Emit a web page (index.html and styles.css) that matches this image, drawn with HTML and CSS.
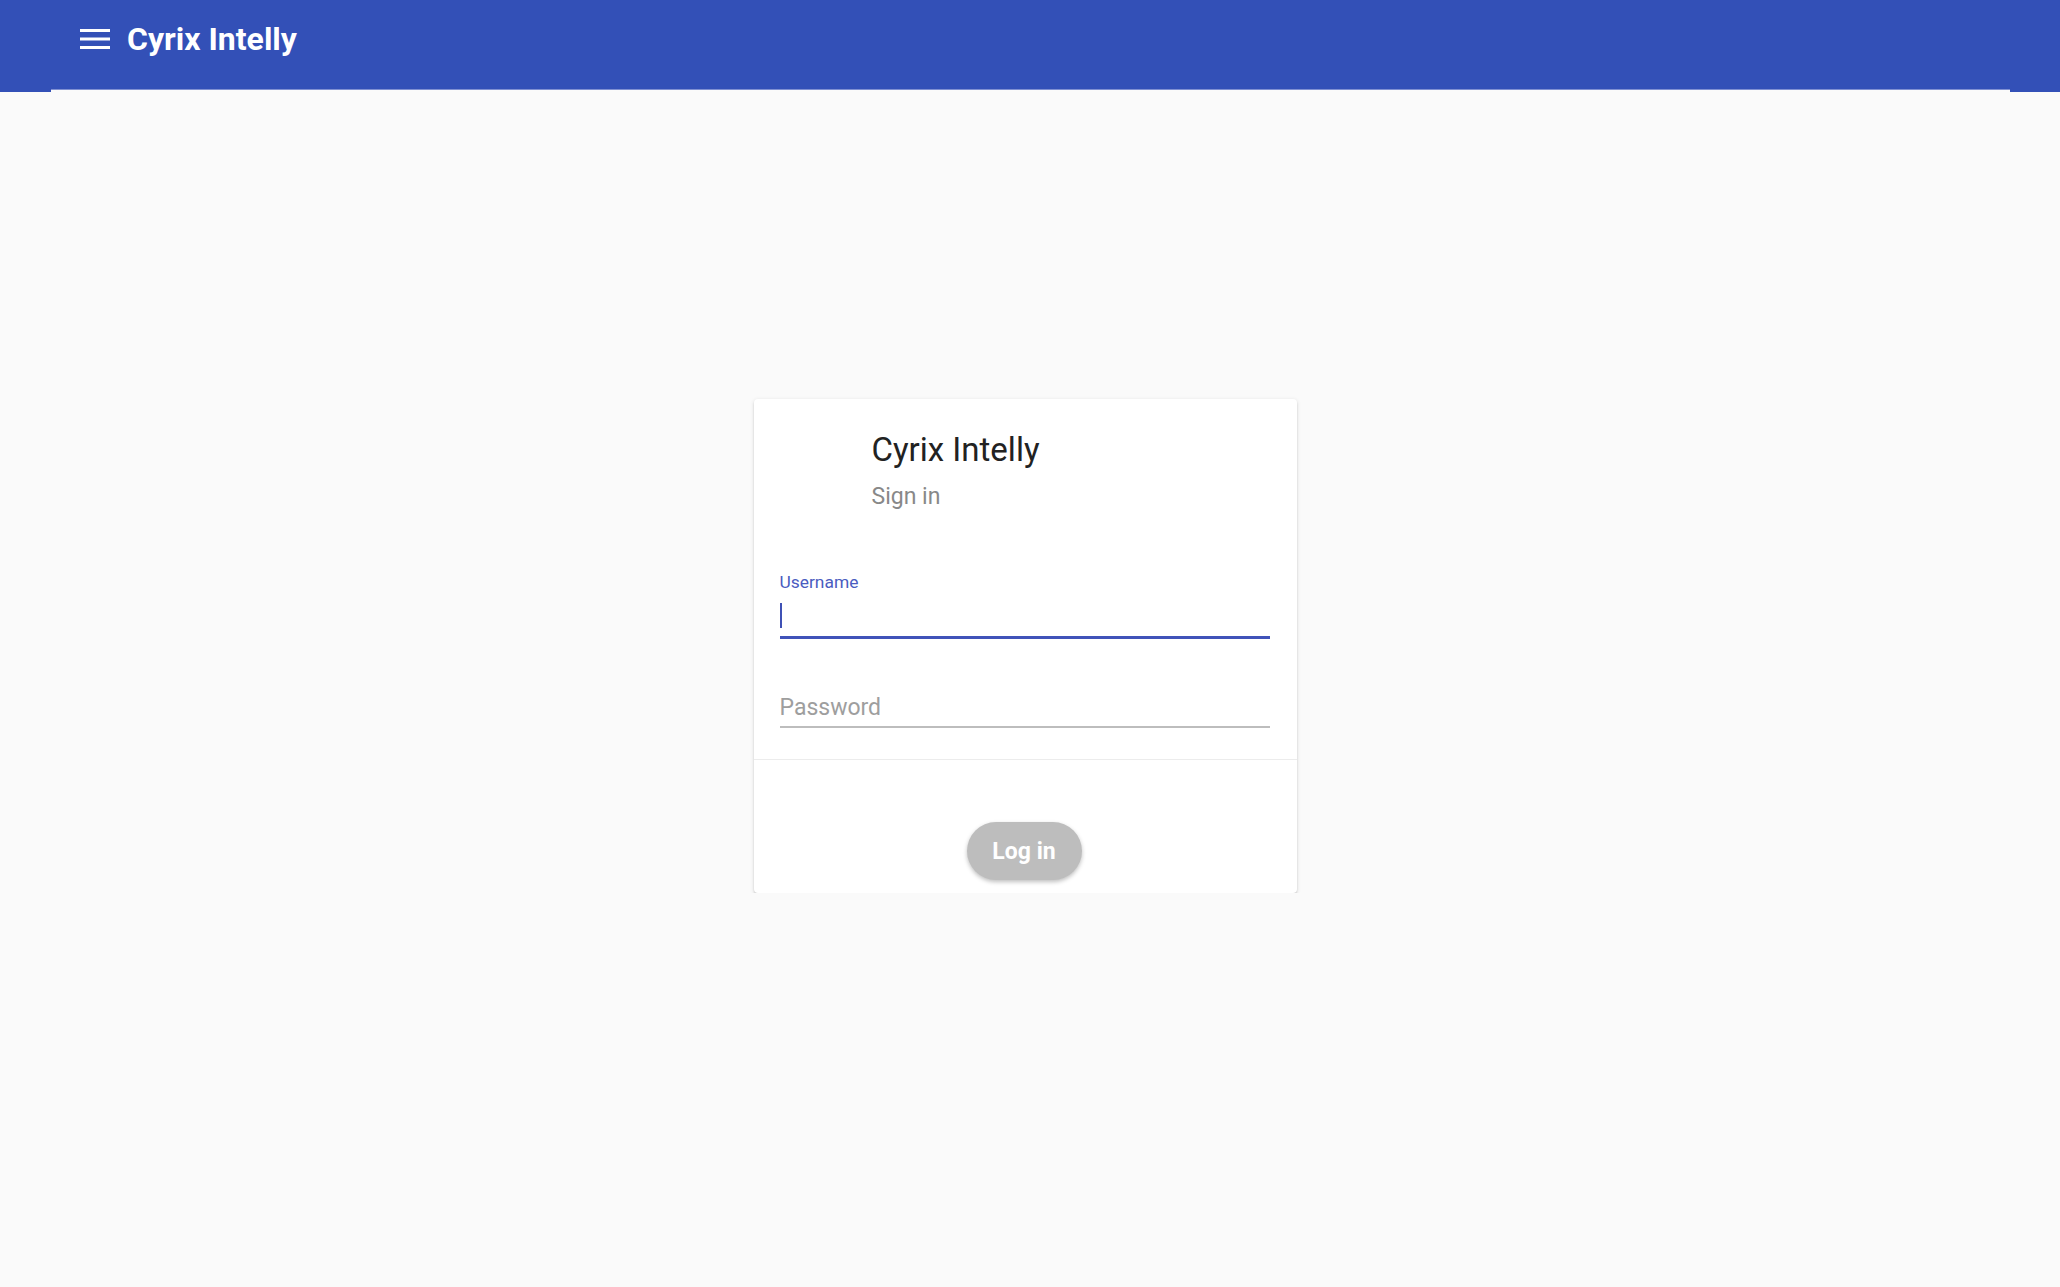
FILE: index.html
```html
<!DOCTYPE html>
<html lang="en">
<head>
    <meta charset="UTF-8">
    <meta name="viewport" content="width=device-width, initial-scale=1.0">
    <title>Sign in | Cyrix Intelly</title>
    <link rel="stylesheet" href="styles.css">
</head>
<body>
    <header class="app-bar">
        <div class="toolbar">
            <button class="menu-btn" aria-label="Menu">
                <svg width="30" height="20" viewBox="0 0 30 20">
                    <path d="M0 1.5h30M0 10h30M0 18.5h30" stroke="#fff" stroke-width="3"/>
                </svg>
            </button>
            <span class="app-title">Cyrix Intelly</span>
        </div>
        <div class="toolbar-edge"></div>
    </header>

    <main class="page">
        <!-- Login card -->
        <div class="card">
            <div class="card-header">
                <h2>Cyrix Intelly</h2>
                <p>Sign in</p>
            </div>

            <form class="card-body" onsubmit="return false">
                <div class="field focused">
                    <label for="username">Username</label>
                    <div class="field-line">
                        <span class="caret"></span>
                        <input type="text" id="username" name="username">
                    </div>
                </div>
                <div class="field">
                    <input type="password" id="password" name="password" placeholder="Password">
                </div>
            </form>

            <div class="card-actions">
                <button class="login-btn" disabled>Log in</button>
            </div>
        </div>
    </main>
</body>
</html>
```

FILE: styles.css
```css
body {
    font-family: 'Roboto', 'Liberation Sans', sans-serif;
    margin: 0;
    padding: 0;
    background-color: #fafafa;
    color: #222;
}

/* App bar */
.app-bar {
    background-color: #3350b7;
    height: 92px;
    display: flex;
    flex-direction: column;
}

.toolbar {
    height: 89px;
    display: flex;
    align-items: center;
    padding: 0 0 11px 80px;
    box-sizing: border-box;
}

.menu-btn {
    background: none;
    border: none;
    padding: 0;
    width: 30px;
    height: 20px;
    display: flex;
    cursor: pointer;
}

.app-title {
    margin-left: 17px;
    color: white;
    font-size: 32px;
    font-weight: bold;
    line-height: 38px;
}

.toolbar-edge {
    margin: 0 50px 0 51px;
    height: 2px;
    border-top: 1px solid #8090d2;
    background-color: #fafafa;
}

/* Card */
.page {
    display: flex;
    justify-content: center;
    padding-top: 307px;
}

.card {
    width: 543px;
    background: white;
    border-radius: 4px;
    box-shadow: 0 2px 2px rgba(0, 0, 0, 0.12), 0 1px 4px rgba(0, 0, 0, 0.12);
    margin-right: 10px;
}

.card-header {
    padding: 31px 26px 0 118px;
}

.card-header h2 {
    margin: 0;
    font-size: 33px;
    font-weight: normal;
    line-height: 40px;
    color: #222;
}

.card-header p {
    margin: 12px 0 0;
    font-size: 23px;
    line-height: 30px;
    color: #888;
}

.card-body {
    padding: 60px 27px 31px 26px;
    border-bottom: 1px solid #ececec;
}

.field label {
    display: block;
    font-size: 17.4px;
    line-height: 20px;
    color: #4a5cc0;
}

.field-line {
    display: flex;
    align-items: center;
    height: 44px;
    border-bottom: 3px solid #4053b9;
}

.caret {
    width: 2px;
    height: 25px;
    margin-top: 2px;
    background-color: #3f51b5;
}

.field input {
    border: none;
    outline: none;
    background: transparent;
    font-family: inherit;
    font-size: 23px;
    padding: 0;
    color: #222;
}

.field-line input {
    flex: 1;
}

.field input[type="password"] {
    display: block;
    width: 100%;
    height: 38px;
    margin-top: 49px;
    border-bottom: 2px solid #bdbdbd;
}

.field input::placeholder {
    color: #9e9e9e;
}

.card-actions {
    display: flex;
    justify-content: center;
    padding: 62px 0 13px;
}

.login-btn {
    width: 115px;
    height: 58px;
    border: none;
    border-radius: 29px;
    background-color: #bdbdbd;
    color: white;
    font-family: inherit;
    font-size: 23px;
    font-weight: bold;
    box-shadow: 0 2px 4px rgba(0, 0, 0, 0.25);
    margin-right: 2px;
}
```
